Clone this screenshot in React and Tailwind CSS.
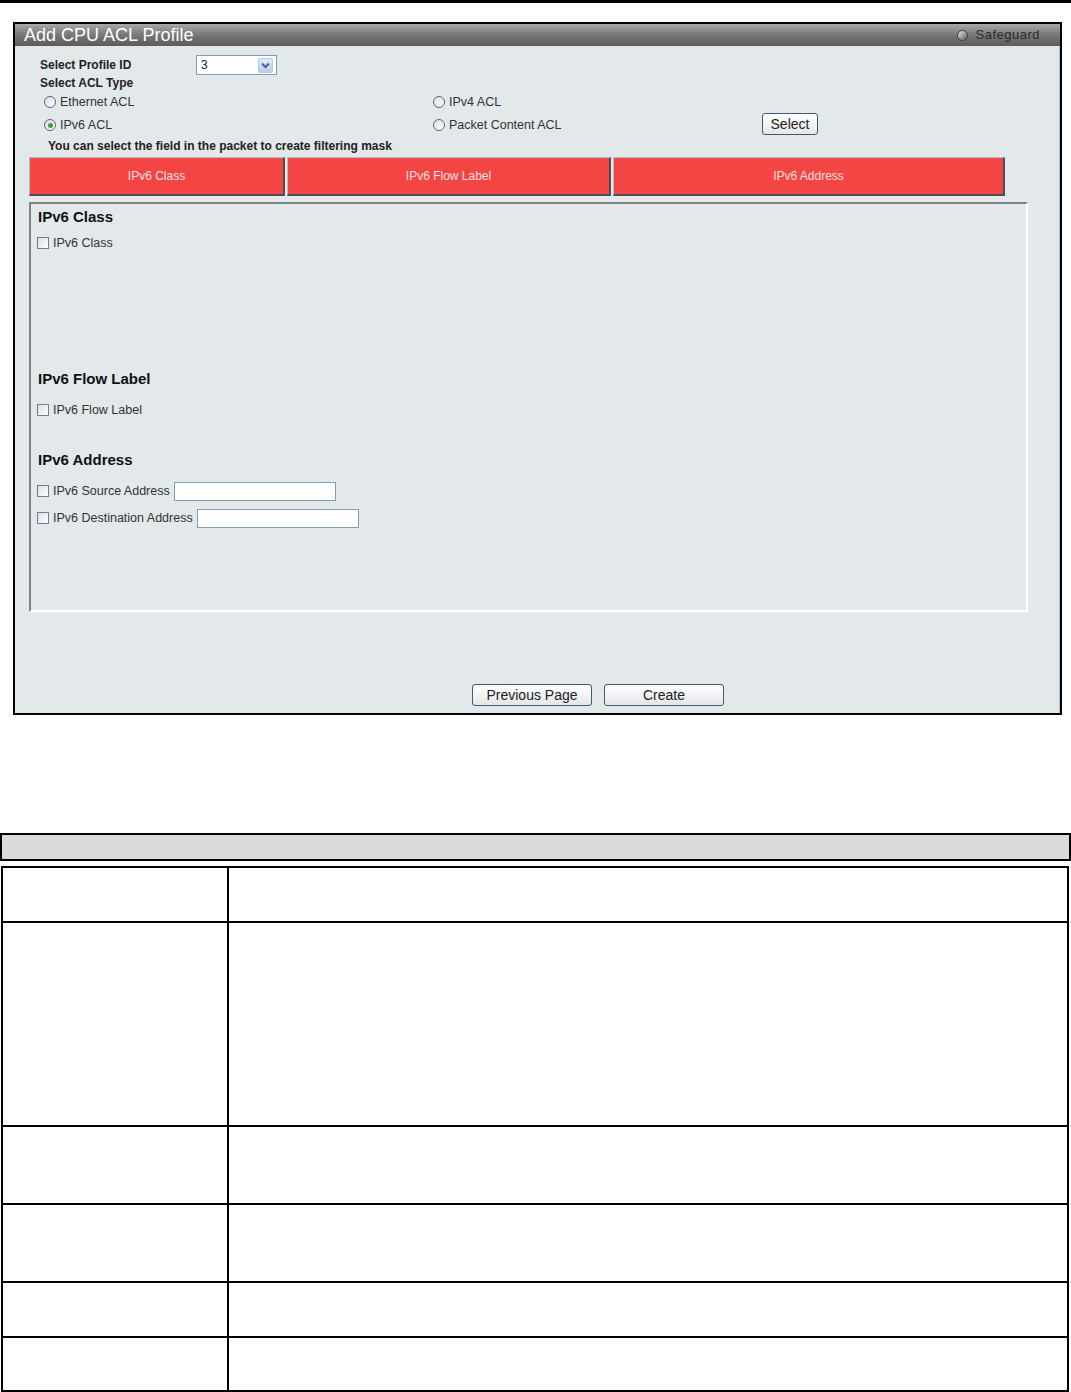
import { useState } from 'react';

function Radio({ checked }) {
  return (
    <span className="w-[12px] h-[12px] rounded-full border border-[#56677a] bg-gradient-to-br from-[#d7dde3] to-white flex items-center justify-center shrink-0">
      {checked && <span className="w-[5px] h-[5px] rounded-full bg-[#3f9b3f]" />}
    </span>
  );
}

function Checkbox() {
  return (
    <span className="w-[12px] h-[12px] border border-[#6d7f91] bg-gradient-to-br from-[#d9dfe5] to-white shrink-0" />
  );
}

function Button({ children, className = '' }) {
  return (
    <button className={`h-[22px] rounded-[3px] border border-[#3f5873] bg-gradient-to-b from-white to-[#e3e6ea] text-[14px] text-[#222] leading-none ${className}`}>
      {children}
    </button>
  );
}

function Tab({ label, width }) {
  return (
    <div className={`${width} h-[39px] bg-[#f44545] border-t border-l border-[#aebfc6] border-b-2 border-r-2 border-b-[#4d4f52] border-r-[#4d4f52] flex items-center justify-center text-[12px] text-[#fde1e1]`}>
      {label}
    </div>
  );
}

export default function App() {
  const [aclType, setAclType] = useState('ipv6');

  // rows of the description table below the screenshot (heights incl. bottom line)
  const tableRows = ['h-[55px]', 'h-[204px]', 'h-[78px]', 'h-[78px]', 'h-[55px]', 'h-[54px]'];

  return (
    <div className="w-[1071px] h-[1392px] bg-white overflow-hidden font-['Liberation_Sans',Arial,sans-serif]">
      {/* Document header line */}
      <div className="h-[3px] bg-black" />

      {/* Screenshot frame */}
      <div className="mt-[19px] ml-[13px] w-[1049px] h-[693px] border-2 border-black flex flex-col bg-[#e3e8eb]">
        {/* Title bar */}
        <div className="h-[22px] shrink-0 bg-gradient-to-b from-[#a9a9a9] via-[#777777] to-[#5c5c5c] flex items-center justify-between pl-[9px] pr-[20px]">
          <span className="text-[18px] leading-[22px] text-white">Add CPU ACL Profile</span>
          <div className="flex items-center gap-[8px]">
            <span className="w-[11px] h-[11px] rounded-full border border-[#3d3d3d] bg-gradient-to-br from-[#e6e6e6] to-[#5e5e5e]" />
            <span className="text-[13px] text-[#2a2a2a] tracking-[0.5px]">Safeguard</span>
          </div>
        </div>

        {/* Content */}
        <div className="flex-1 flex flex-col border-r border-[#9fc3d8]">
          <div className="mt-[9px] h-[20px] flex items-center pl-[25px]">
            <span className="w-[156px] text-[12px] font-bold text-[#222]">Select Profile ID</span>
            <div className="w-[81px] h-[20px] bg-white border border-[#7f9db9] flex items-center justify-between pl-[4px] pr-[3px]">
              <span className="text-[12px] text-[#222]">3</span>
              <span className="w-[15px] h-[15px] rounded-[2px] bg-gradient-to-b from-[#e2ebfa] to-[#b7cdf0] border border-[#b4c8e8] flex items-center justify-center">
                <svg width="9" height="7" viewBox="0 0 9 7">
                  <path d="M1 1.5 L4.5 5 L8 1.5" fill="none" stroke="#4d6185" strokeWidth="2" />
                </svg>
              </span>
            </div>
          </div>
          <div className="h-[16px] flex items-center pl-[25px] text-[12px] font-bold text-[#222]">Select ACL Type</div>

          <div className="mt-[2px] h-[18px] flex items-center pl-[29px] text-[12.5px] text-[#333]">
            <label className="w-[389px] flex items-center gap-[4px]" onClick={() => setAclType('eth')}>
              <Radio checked={aclType === 'eth'} /> Ethernet ACL
            </label>
            <label className="flex items-center gap-[4px]" onClick={() => setAclType('ipv4')}>
              <Radio checked={aclType === 'ipv4'} /> IPv4 ACL
            </label>
          </div>
          <div className="mt-[3px] h-[22px] flex items-center pl-[29px] text-[12.5px] text-[#333]">
            <label className="w-[389px] flex items-center gap-[4px]" onClick={() => setAclType('ipv6')}>
              <Radio checked={aclType === 'ipv6'} /> IPv6 ACL
            </label>
            <label className="w-[329px] flex items-center gap-[4px]" onClick={() => setAclType('pkt')}>
              <Radio checked={aclType === 'pkt'} /> Packet Content ACL
            </label>
            <Button className="w-[56px] -mt-[3px]">Select</Button>
          </div>
          <div className="mt-[2px] h-[16px] flex items-center pl-[33px] text-[12px] font-bold text-[#222]">
            You can select the field in the packet to create filtering mask
          </div>

          {/* Tabs */}
          <div className="mt-[3px] ml-[14px] flex gap-[2px]">
            <Tab label="IPv6 Class" width="w-[256px]" />
            <Tab label="IPv6 Flow Label" width="w-[324px]" />
            <Tab label="IPv6 Address" width="w-[392px]" />
          </div>

          {/* Panel */}
          <div className="mt-[6px] ml-[14px] w-[999px] h-[410px] border-2 border-t-[#7d8286] border-l-[#7d8286] border-r-white border-b-white flex flex-col pl-[6px] text-[12.5px] text-[#333]">
            <div className="mt-[4px] h-[18px] flex items-center pl-[1px] text-[15px] font-bold text-[#111]">IPv6 Class</div>
            <div className="mt-[8px] h-[18px] flex items-center gap-[4px]">
              <Checkbox /> IPv6 Class
            </div>

            <div className="mt-[118px] h-[18px] flex items-center pl-[1px] text-[15px] font-bold text-[#111]">IPv6 Flow Label</div>
            <div className="mt-[13px] h-[18px] flex items-center gap-[4px]">
              <Checkbox /> IPv6 Flow Label
            </div>

            <div className="mt-[32px] h-[18px] flex items-center pl-[1px] text-[15px] font-bold text-[#111]">IPv6 Address</div>
            <div className="mt-[12px] h-[20px] flex items-center gap-[4px]">
              <Checkbox /> IPv6 Source Address
              <input className="w-[162px] h-[19px] bg-white border border-[#7f9db9] outline-none" />
            </div>
            <div className="mt-[7px] h-[20px] flex items-center gap-[4px]">
              <Checkbox /> IPv6 Destination Address
              <input className="w-[162px] h-[19px] bg-white border border-[#7f9db9] outline-none" />
            </div>
          </div>

          {/* Bottom buttons */}
          <div className="mt-[72px] pl-[457px] flex gap-[12px]">
            <Button className="w-[120px]">Previous Page</Button>
            <Button className="w-[120px]">Create</Button>
          </div>
        </div>
      </div>

      {/* Description table */}
      <div className="mt-[118px] h-[28px] border-2 border-black bg-[#dadada]" />
      <div className="mt-[5px] ml-[1px] w-[1068px] border-t-2 border-x-2 border-black">
        {tableRows.map((h, i) => (
          <div key={i} className={`${h} flex border-b-2 border-black`}>
            <div className="w-[226px] border-r-2 border-black" />
            <div className="flex-1" />
          </div>
        ))}
      </div>
    </div>
  );
}
